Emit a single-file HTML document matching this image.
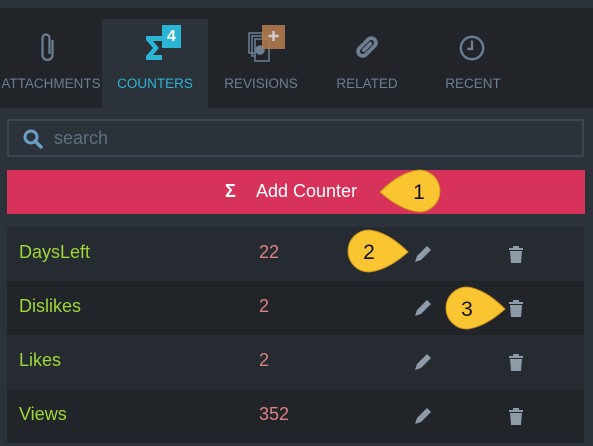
<!DOCTYPE html><html><head><style>
*{margin:0;padding:0;box-sizing:border-box}
body{width:593px;height:446px;background:#2b323a;font-family:"Liberation Sans",sans-serif;position:relative;overflow:hidden}
.tabs{position:absolute;left:0;top:8px;width:593px;height:100px;background:#212429}
.tab{position:absolute;top:11px;height:89px;text-align:center;color:#6e7e93;font-size:13.5px}
.tab .lbl{position:absolute;top:57px;left:0;right:0}
.tab svg{position:absolute}
.active{background:#2b323a;color:#2bb5d5}
.search{position:absolute;left:7px;top:119px;width:577px;height:38px;border:2px solid #3b4652;background:#2b323a}
.search span{position:absolute;left:45px;top:7px;color:#5f6f82;font-size:18px}
.btn{position:absolute;left:7px;top:170px;width:578px;height:44px;background:#d6325a;color:#fff;font-size:18px}
.row{position:absolute;left:7px;width:577px;height:54px}
.row .n{position:absolute;left:12px;top:15px;color:#9fd638;font-size:18px}
.row .v{position:absolute;left:252px;top:15px;color:#dd8282;font-size:18px}
</style></head><body>
<div class="tabs">
 <div class="tab" style="left:0;width:102px"><svg style="left:39px;top:13px" width="18" height="32" viewBox="0 0 18 32"><path d="M13.5 8v15a5 5 0 0 1-10 0V6a3.5 3.5 0 0 1 7 0v16" fill="none" stroke="#6e7e93" stroke-width="2.2"/></svg><div class="lbl">ATTACHMENTS</div></div>
 <div class="tab active" style="left:102px;width:106px"><svg style="left:42px;top:16px" width="20" height="26" viewBox="0 0 20 26"><path d="M2 1h16v5H9l6 7-6 7h9v5H2v-4l7-8-7-8z" fill="#2bb5d5"/></svg><div style="position:absolute;left:60px;top:6px;width:19px;height:23px;background:#2bb5d5;color:#fff;font-weight:bold;font-size:16px;line-height:23px">4</div><div class="lbl">COUNTERS</div></div>
 <div class="tab" style="left:208px;width:106px"><svg style="left:40px;top:6px" width="40" height="38" viewBox="0 0 40 38"><g fill="none" stroke="#6e7e93" stroke-width="1.5"><rect x="1" y="8" width="14" height="20"/><rect x="4" y="11" width="14" height="20"/><rect x="7" y="14" width="14" height="22" fill="#212429"/><circle cx="12" cy="25" r="4" fill="#6e7e93"/></g><rect x="14" y="0" width="23" height="24" fill="#b07a4c" opacity=".9"/><path d="M25.5 6v10M20.5 11h10" stroke="#ccc" stroke-width="2.5"/></svg><div class="lbl">REVISIONS</div></div>
 <div class="tab" style="left:314px;width:106px"><svg style="left:39px;top:14px" width="28" height="28" viewBox="0 0 26 26"><g fill="none" stroke="#6e7e93" stroke-width="3.5" stroke-linecap="round"><path d="M11 9l3-3a4 4 0 0 1 6 6l-3 3"/><path d="M15 17l-3 3a4 4 0 0 1-6-6l3-3"/><path d="M10 16l6-6"/></g></svg><div class="lbl">RELATED</div></div>
 <div class="tab" style="left:420px;width:106px"><svg style="left:38px;top:15px" width="28" height="28" viewBox="0 0 30 30"><circle cx="15" cy="15" r="12" fill="none" stroke="#6e7e93" stroke-width="2.5"/><path d="M15 7v9h-5" fill="none" stroke="#6e7e93" stroke-width="2.5"/></svg><div class="lbl">RECENT</div></div>
</div>
<div class="search"><svg style="position:absolute;left:13px;top:7px" width="22" height="22" viewBox="0 0 22 22"><circle cx="9" cy="9" r="6" fill="none" stroke="#6b9ec4" stroke-width="3"/><path d="M13 13l6 6" stroke="#6b9ec4" stroke-width="3.5" stroke-linecap="round"/></svg><span>search</span></div>
<div class="btn"><span style="position:absolute;left:218px;top:11px;font-weight:bold;font-size:18px">Σ</span><span style="position:absolute;left:249px;top:11px">Add Counter</span></div>
<div class="row" style="top:227px;background:#262a31"><span class="n">DaysLeft</span><span class="v">22</span></div>
<div class="row" style="top:281px;background:#212429"><span class="n">Dislikes</span><span class="v">2</span></div>
<div class="row" style="top:335px;background:#262a31"><span class="n">Likes</span><span class="v">2</span></div>
<div class="row" style="top:389px;background:#212429"><span class="n">Views</span><span class="v">352</span></div>
<svg style="position:absolute;left:0;top:0" width="593" height="446">
<defs><g id="p"><path d="M0 17l2-6 10-10 4 4-10 10z" fill="#8e9aa8"/></g><g id="b" fill="#8e9aa8"><rect x="0" y="2" width="14" height="2"/><rect x="4" y="0" width="6" height="2"/><path d="M1 5h12l-1 12H2z"/></g></defs>
<use href="#p" x="415" y="245"/><use href="#p" x="415" y="299"/><use href="#p" x="415" y="353"/><use href="#p" x="415" y="407"/>
<use href="#b" x="509" y="246"/><use href="#b" x="509" y="300"/><use href="#b" x="509" y="354"/><use href="#b" x="509" y="408"/>
<g fill="#fbc531" stroke="#c9961a" stroke-width="1">
<path d="M380 192 Q400 172 419 170 A21 21 0 1 1 419 212 Q400 210 380 192Z"/>
<path d="M408 252 Q388 232 369 230 A21 21 0 1 0 369 272 Q388 270 408 252Z"/>
<path d="M505 309 Q485 289 467 287 A21 21 0 1 0 467 329 Q485 327 505 309Z"/></g>
<g font-family="Liberation Sans" font-size="21" fill="#111" text-anchor="middle"><text x="419" y="199">1</text><text x="369" y="259">2</text><text x="467" y="316">3</text></g>
</svg>
</body></html>
